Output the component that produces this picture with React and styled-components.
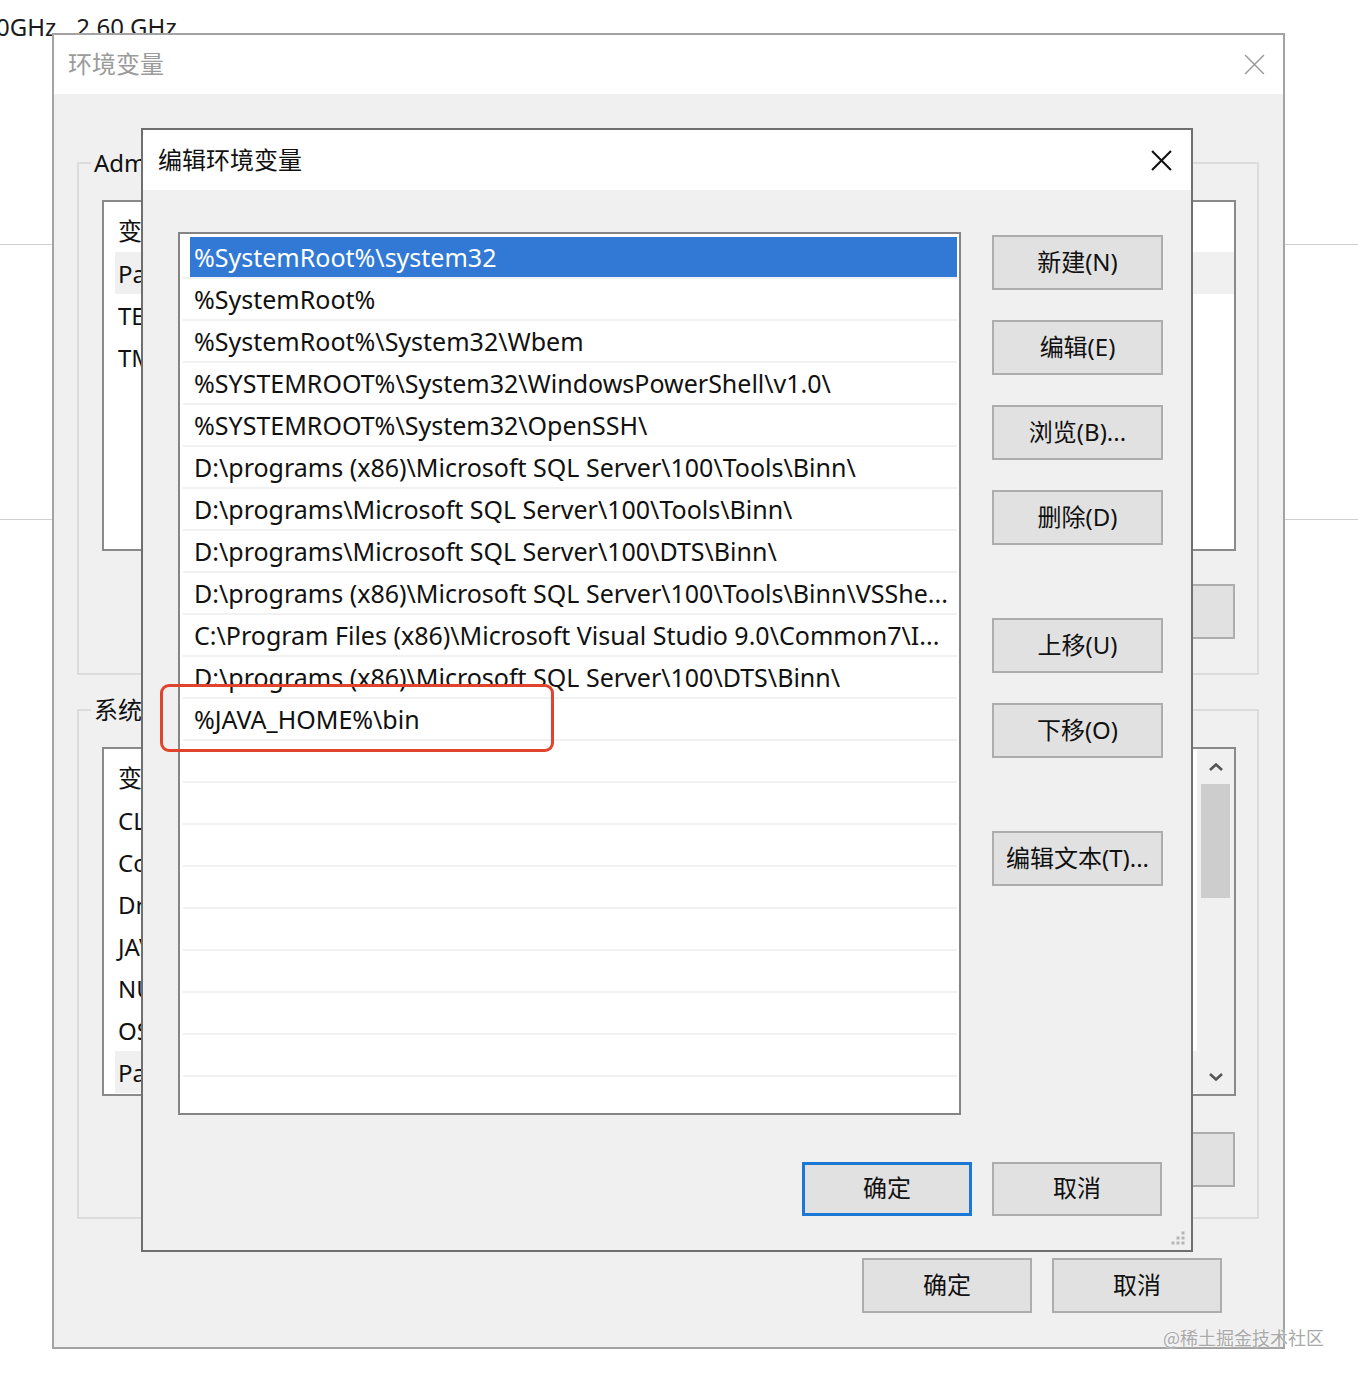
import React from "react";
import styled, { createGlobalStyle } from "styled-components";

const Global = createGlobalStyle`
  html, body { margin: 0; padding: 0; background: #ffffff; }
  body {
    font-family: "Noto Sans", "Noto Sans CJK SC", sans-serif;
    color: #111;
  }
  * { box-sizing: border-box; }
`;

const Desktop = styled.div`
  position: relative;
  width: 1358px;
  height: 1384px;
  overflow: hidden;
  background: #ffffff;
`;

const InfoLine = styled.div`
  display: flex;
  gap: 20px;
  margin-left: -4px;
  padding-top: 11px;
  font-size: 24px;
  line-height: 32px;
  color: #1a1a1a;
`;

const Rule = styled.div`
  height: 1px;
  margin-top: ${(p) => p.$gap}px;
  background: #cfcfcf;
`;

/* ---------- shared window parts ---------- */

const Window = styled.div`
  position: absolute;
  left: ${(p) => p.$left}px;
  top: ${(p) => p.$top}px;
  width: ${(p) => p.$width}px;
  height: ${(p) => p.$height}px;
  border: 2px solid ${(p) => p.$frame};
  background: #f0f0f0;
  display: flex;
  flex-direction: column;
`;

const TitleBar = styled.div`
  flex: none;
  height: ${(p) => p.$h}px;
  background: #ffffff;
  display: flex;
  align-items: center;
  justify-content: space-between;
  padding: 0 ${(p) => p.$pr}px 0 ${(p) => p.$pl}px;
`;

const TitleText = styled.div`
  font-family: "Noto Sans CJK SC", sans-serif;
  font-size: 24px;
  line-height: 30px;
  padding-bottom: 3px;
  color: ${(p) => (p.$inactive ? "#9b9b9b" : "#111")};
`;

const CloseIcon = ({ color, width, size }) => (
  <svg width={size} height={size} viewBox="0 0 20 20">
    <path d="M1 1 L19 19 M19 1 L1 19" stroke={color} strokeWidth={width} fill="none" />
  </svg>
);

const Button = styled.div`
  flex: none;
  width: ${(p) => p.$w || 171}px;
  height: ${(p) => p.$h || 55}px;
  margin-top: ${(p) => p.$mt || 0}px;
  padding-bottom: 5px;
  background: #e1e1e1;
  border: ${(p) => (p.$default ? "3px solid #1b78d4" : "2px solid #adadad")};
  display: flex;
  align-items: center;
  justify-content: center;
  font-family: "Noto Sans", "Noto Sans CJK SC", sans-serif;
  font-size: 24px;
  color: #111;
  white-space: nowrap;
`;

/* ---------- background window ---------- */

const EnvBody = styled.div`
  flex: 1;
  display: flex;
  flex-direction: column;
  padding: 53px 24px 0 23px;
`;

const Group = styled.fieldset`
  margin: ${(p) => p.$mt || 0}px 0 0 0;
  padding: 21px 21px ${(p) => p.$pb}px 23px;
  border: 2px solid #dcdcdc;
  min-width: 0;
`;

const Legend = styled.legend`
  margin-left: -11px;
  padding: 0 3px;
  font-family: "Noto Sans", "Noto Sans CJK SC", sans-serif;
  font-size: 24px;
  line-height: 32px;
  color: #111;
`;

const BgList = styled.div`
  height: ${(p) => p.$h}px;
  border: 2px solid #8a8a8a;
  background: #ffffff;
  display: flex;
  overflow: hidden;
`;

const BgListRows = styled.div`
  flex: 1;
  padding: 4px 0 0 11px;
`;

const BgRow = styled.div`
  display: flex;
  align-items: center;
  height: ${(p) => (p.$header ? 46 : 42)}px;
  padding-left: 3px;
  background: ${(p) => (p.$hl ? "#f0f0f0" : "transparent")};
  font-size: 24px;
  color: #111;
  white-space: nowrap;
`;

const Scrollbar = styled.div`
  flex: none;
  width: 37px;
  background: #f0f0f0;
  display: flex;
  flex-direction: column;
  align-items: center;
`;

const ScrollArrow = styled.div`
  height: 35px;
  display: flex;
  align-items: center;
  justify-content: center;
`;

const ScrollTrack = styled.div`
  flex: 1;
  width: 100%;
  padding: 0 4px 0 4px;
`;

const ScrollThumb = styled.div`
  height: 114px;
  background: #cdcdcd;
`;

const Chevron = ({ up }) => (
  <svg width="16" height="10" viewBox="0 0 16 10">
    <path
      d={up ? "M2 8 L8 2.5 L14 8" : "M2 2 L8 7.5 L14 2"}
      stroke="#555"
      strokeWidth="2.6"
      fill="none"
    />
  </svg>
);

const ButtonRow = styled.div`
  display: flex;
  justify-content: flex-end;
  gap: ${(p) => p.$gap || 20}px;
  margin-top: ${(p) => p.$mt}px;
  margin-right: ${(p) => p.$mr || 0}px;
`;

/* ---------- front dialog ---------- */

const EditBody = styled.div`
  flex: 1;
  display: flex;
  flex-direction: column;
  padding: 42px 28px 34px 35px;
`;

const MainRow = styled.div`
  display: flex;
  gap: 31px;
`;

const PathList = styled.div`
  width: 783px;
  height: 883px;
  border: 2px solid #858585;
  background: #ffffff;
  padding: 3px 2px 0 3px;
  overflow: hidden;
`;

const PathRow = styled.div`
  height: 42px;
  display: flex;
  padding-left: 7px;
  border-bottom: 2px solid #f1f1f1;
`;

const PathText = styled.div`
  flex: 1;
  padding-left: 4px;
  line-height: 40px;
  font-size: 25px;
  white-space: nowrap;
  overflow: hidden;
  color: ${(p) => (p.$selected ? "#ffffff" : "#111")};
  background: ${(p) => (p.$selected ? "#3179d4" : "transparent")};
`;

const ButtonColumn = styled.div`
  display: flex;
  flex-direction: column;
  gap: 30px;
  padding-top: 3px;
`;

const Highlight = styled.div`
  position: absolute;
  left: 17px;
  top: 554px;
  width: 394px;
  height: 68px;
  border: 3.5px solid #e0442c;
  border-radius: 9px;
  pointer-events: none;
`;

const Grip = styled.svg`
  position: absolute;
  right: 5px;
  bottom: 4px;
`;

const Watermark = styled.div`
  position: absolute;
  left: 1163px;
  top: 1324px;
  font-family: "Noto Sans CJK SC", sans-serif;
  font-size: 18px;
  line-height: 26px;
  color: #a9a9a9;
  text-shadow: 0 0 2px #fff;
`;

const paths = [
  "%SystemRoot%\\system32",
  "%SystemRoot%",
  "%SystemRoot%\\System32\\Wbem",
  "%SYSTEMROOT%\\System32\\WindowsPowerShell\\v1.0\\",
  "%SYSTEMROOT%\\System32\\OpenSSH\\",
  "D:\\programs (x86)\\Microsoft SQL Server\\100\\Tools\\Binn\\",
  "D:\\programs\\Microsoft SQL Server\\100\\Tools\\Binn\\",
  "D:\\programs\\Microsoft SQL Server\\100\\DTS\\Binn\\",
  "D:\\programs (x86)\\Microsoft SQL Server\\100\\Tools\\Binn\\VSShe...",
  "C:\\Program Files (x86)\\Microsoft Visual Studio 9.0\\Common7\\I...",
  "D:\\programs (x86)\\Microsoft SQL Server\\100\\DTS\\Binn\\",
  "%JAVA_HOME%\\bin",
];
const rows = [...paths, ...Array(9).fill("")];

const userVars = [["Path", true], ["TEMP"], ["TMP"]];
const sysVars = [
  ["CLASSPATH"],
  ["ComSpec"],
  ["DriverData"],
  ["JAVA_HOME"],
  ["NUMBER_OF_PROCESSORS"],
  ["OS"],
  ["Path", true],
];

function VarList({ vars, height, scroll }) {
  return (
    <BgList $h={height}>
      <BgListRows>
        <BgRow $header>变量</BgRow>
        {vars.map(([n, hl]) => (
          <BgRow key={n} $hl={hl}>
            {n}
          </BgRow>
        ))}
      </BgListRows>
      {scroll && (
        <Scrollbar>
          <ScrollArrow>
            <Chevron up />
          </ScrollArrow>
          <ScrollTrack>
            <ScrollThumb />
          </ScrollTrack>
          <ScrollArrow>
            <Chevron />
          </ScrollArrow>
        </Scrollbar>
      )}
    </BgList>
  );
}

export default function App() {
  return (
    <>
      <Global />
      <Desktop>
        <InfoLine>
          <span>0GHz</span>
          <span>2.60 GHz</span>
        </InfoLine>
        <Rule $gap={201} />
        <Rule $gap={274} />

        <Window $left={52} $top={33} $width={1233} $height={1316} $frame="#a3a3a3">
          <TitleBar $h={59} $pl={14} $pr={18}>
            <TitleText $inactive>环境变量</TitleText>
            <CloseIcon color="#9a9a9a" width={1.4} size={21} />
          </TitleBar>
          <EnvBody>
            <Group $pb={34}>
              <Legend>Administrator 的用户变量(U)</Legend>
              <VarList vars={userVars} height={351} />
              <ButtonRow $mt={33} $mr={1}>
                <Button>新建(N)...</Button>
                <Button>编辑(E)...</Button>
                <Button>删除(D)</Button>
              </ButtonRow>
            </Group>
            <Group $mt={19} $pb={30}>
              <Legend>系统变量(S)</Legend>
              <VarList vars={sysVars} height={349} scroll />
              <ButtonRow $mt={36} $mr={1}>
                <Button>新建(W)...</Button>
                <Button>编辑(I)...</Button>
                <Button>删除(L)</Button>
              </ButtonRow>
            </Group>
            <ButtonRow $mt={39} $mr={37}>
              <Button $w={170} $h={55}>确定</Button>
              <Button $w={170} $h={55}>取消</Button>
            </ButtonRow>
          </EnvBody>
        </Window>

        <Window $left={141} $top={128} $width={1052} $height={1124} $frame="#6f6f6f">
          <TitleBar $h={60} $pl={15} $pr={19}>
            <TitleText>编辑环境变量</TitleText>
            <CloseIcon color="#111" width={2} size={21} />
          </TitleBar>
          <EditBody>
            <MainRow>
              <PathList>
                {rows.map((r, i) => (
                  <PathRow key={i}>
                    <PathText $selected={i === 0}>{r}</PathText>
                  </PathRow>
                ))}
              </PathList>
              <ButtonColumn>
                <Button>新建(N)</Button>
                <Button>编辑(E)</Button>
                <Button>浏览(B)...</Button>
                <Button>删除(D)</Button>
                <Button $mt={43}>上移(U)</Button>
                <Button>下移(O)</Button>
                <Button $mt={43}>编辑文本(T)...</Button>
              </ButtonColumn>
            </MainRow>
            <ButtonRow $mt={47} $mr={1}>
              <Button $w={170} $h={54} $default>确定</Button>
              <Button $w={170} $h={54}>取消</Button>
            </ButtonRow>
          </EditBody>
          <Highlight />
          <Grip width="16" height="16" viewBox="0 0 16 16">
            {[
              [13, 3],
              [13, 8],
              [8, 8],
              [13, 13],
              [8, 13],
              [3, 13],
            ].map(([x, y]) => (
              <rect key={`${x}-${y}`} x={x - 1.5} y={y - 1.5} width="3" height="3" fill="#b5b5b5" />
            ))}
          </Grip>
        </Window>

        <Watermark>@稀土掘金技术社区</Watermark>
      </Desktop>
    </>
  );
}
